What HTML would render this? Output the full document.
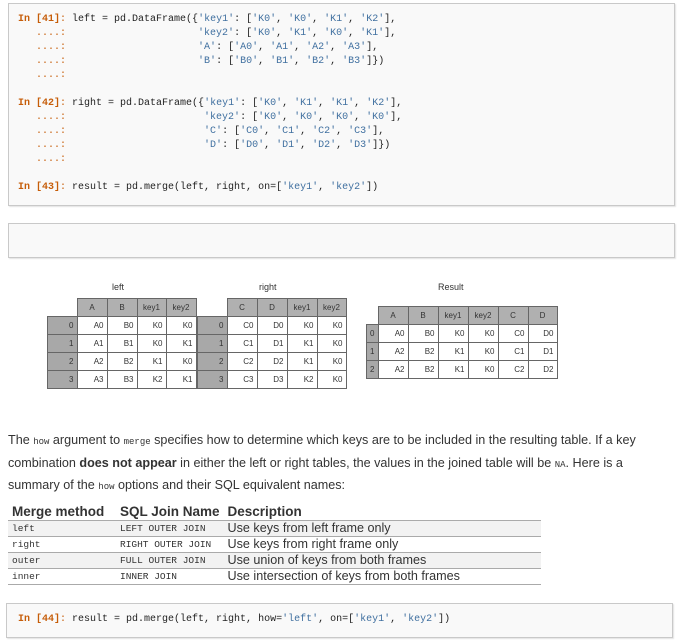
<!DOCTYPE html>
<html><head><style>
body{margin:0;width:700px;height:644px;background:#fff;position:relative;overflow:hidden;font-family:"Liberation Sans",sans-serif}
.box{position:absolute;background:#f9f9f9;border:1px solid #c9c9c9;box-shadow:1px 1px 1px #e4e4e4}
pre{position:absolute;margin:0;font-family:"Liberation Mono",monospace;font-size:10px;line-height:14px;color:#222}
.p{color:#c65d09;font-weight:bold}
.c{color:#c65d09}
.s{color:#4070a0}
table.df{position:absolute;border-collapse:collapse;font-size:8px;color:#333}
table.df td{border:1px solid #666;height:17px;padding:0 3px;text-align:right;background:#fff}
table.df td.h{background:#b0b0b0;text-align:center}
table.df td.i{background:#a8a8a8}
table.df td.e{border:none;background:none}
.lbl{position:absolute;font-size:9px;color:#333}
.txt{position:absolute;left:8px;width:670px;font-size:12.6px;line-height:20.5px;color:#333}
code{font-family:"Liberation Mono",monospace;font-size:9px}
table.m{position:absolute;left:8px;top:503px;border-collapse:collapse;font-size:12.6px;color:#333;white-space:nowrap}
table.m th{text-align:left;font-weight:bold;padding:0 4px;height:17px;line-height:17px;border-bottom:1px solid #aaa;font-size:13.5px}
table.m td{padding:0 4px;height:15px;line-height:15px;border-bottom:1px solid #aaa}
table.m tr:nth-child(2) td,table.m tr:nth-child(4) td{background:#f2f2f2}
table.m td.k{font-family:"Liberation Mono",monospace;font-size:9.5px}
</style></head><body>
<div class="box" style="left:8px;top:3px;width:665px;height:201px"></div>
<pre style="left:18px;top:13px"><span class="p">In [41]</span><span class="c">:</span> left = pd.DataFrame({<span class="s">'key1'</span>: [<span class="s">'K0'</span>, <span class="s">'K0'</span>, <span class="s">'K1'</span>, <span class="s">'K2'</span>],
<span class="c">   ....:</span>                      <span class="s">'key2'</span>: [<span class="s">'K0'</span>, <span class="s">'K1'</span>, <span class="s">'K0'</span>, <span class="s">'K1'</span>],
<span class="c">   ....:</span>                      <span class="s">'A'</span>: [<span class="s">'A0'</span>, <span class="s">'A1'</span>, <span class="s">'A2'</span>, <span class="s">'A3'</span>],
<span class="c">   ....:</span>                      <span class="s">'B'</span>: [<span class="s">'B0'</span>, <span class="s">'B1'</span>, <span class="s">'B2'</span>, <span class="s">'B3'</span>]})
<span class="c">   ....:</span>

<span class="p">In [42]</span><span class="c">:</span> right = pd.DataFrame({<span class="s">'key1'</span>: [<span class="s">'K0'</span>, <span class="s">'K1'</span>, <span class="s">'K1'</span>, <span class="s">'K2'</span>],
<span class="c">   ....:</span>                       <span class="s">'key2'</span>: [<span class="s">'K0'</span>, <span class="s">'K0'</span>, <span class="s">'K0'</span>, <span class="s">'K0'</span>],
<span class="c">   ....:</span>                       <span class="s">'C'</span>: [<span class="s">'C0'</span>, <span class="s">'C1'</span>, <span class="s">'C2'</span>, <span class="s">'C3'</span>],
<span class="c">   ....:</span>                       <span class="s">'D'</span>: [<span class="s">'D0'</span>, <span class="s">'D1'</span>, <span class="s">'D2'</span>, <span class="s">'D3'</span>]})
<span class="c">   ....:</span>

<span class="p">In [43]</span><span class="c">:</span> result = pd.merge(left, right, on=[<span class="s">'key1'</span>, <span class="s">'key2'</span>])</pre>
<div class="box" style="left:8px;top:223px;width:665px;height:33px"></div>

<div class="lbl" style="left:112px;top:282px">left</div>
<table class="df" style="left:47px;top:298px">
<tr><td class="e" style="width:23px"></td><td class="h" style="width:23px">A</td><td class="h" style="width:23px">B</td><td class="h" style="width:22px">key1</td><td class="h" style="width:23px">key2</td></tr>
<tr><td class="i">0</td><td>A0</td><td>B0</td><td>K0</td><td>K0</td></tr>
<tr><td class="i">1</td><td>A1</td><td>B1</td><td>K0</td><td>K1</td></tr>
<tr><td class="i">2</td><td>A2</td><td>B2</td><td>K1</td><td>K0</td></tr>
<tr><td class="i">3</td><td>A3</td><td>B3</td><td>K2</td><td>K1</td></tr>
</table>
<div class="lbl" style="left:259px;top:282px">right</div>
<table class="df" style="left:197px;top:298px">
<tr><td class="e" style="width:23px"></td><td class="h" style="width:23px">C</td><td class="h" style="width:23px">D</td><td class="h" style="width:23px">key1</td><td class="h" style="width:22px">key2</td></tr>
<tr><td class="i">0</td><td>C0</td><td>D0</td><td>K0</td><td>K0</td></tr>
<tr><td class="i">1</td><td>C1</td><td>D1</td><td>K1</td><td>K0</td></tr>
<tr><td class="i">2</td><td>C2</td><td>D2</td><td>K1</td><td>K0</td></tr>
<tr><td class="i">3</td><td>C3</td><td>D3</td><td>K2</td><td>K0</td></tr>
</table>
<div class="lbl" style="left:438px;top:282px">Result</div>
<table class="df" style="left:366px;top:306px">
<tr><td class="e" style="width:5px"></td><td class="h" style="width:23px">A</td><td class="h" style="width:23px">B</td><td class="h" style="width:23px">key1</td><td class="h" style="width:23px">key2</td><td class="h" style="width:23px">C</td><td class="h" style="width:22px">D</td></tr>
<tr><td class="i">0</td><td>A0</td><td>B0</td><td>K0</td><td>K0</td><td>C0</td><td>D0</td></tr>
<tr><td class="i">1</td><td>A2</td><td>B2</td><td>K1</td><td>K0</td><td>C1</td><td>D1</td></tr>
<tr><td class="i">2</td><td>A2</td><td>B2</td><td>K1</td><td>K0</td><td>C2</td><td>D2</td></tr>
</table>

<div class="txt" style="top:430px">The <code>how</code> argument to <code>merge</code> specifies how to determine which keys are to be included in the resulting table. If a key combination <b>does not appear</b> in either the left or right tables, the values in the joined table will be <code>NA</code>. Here is a summary of the <code>how</code> options and their SQL equivalent names:</div>

<table class="m">
<tr><th style="width:100px">Merge method</th><th style="width:99px">SQL Join Name</th><th style="width:309px">Description</th></tr>
<tr><td class="k">left</td><td class="k">LEFT OUTER JOIN</td><td>Use keys from left frame only</td></tr>
<tr><td class="k">right</td><td class="k">RIGHT OUTER JOIN</td><td>Use keys from right frame only</td></tr>
<tr><td class="k">outer</td><td class="k">FULL OUTER JOIN</td><td>Use union of keys from both frames</td></tr>
<tr><td class="k">inner</td><td class="k">INNER JOIN</td><td>Use intersection of keys from both frames</td></tr>
</table>

<div class="box" style="left:6px;top:603px;width:665px;height:33px"></div>
<pre style="left:18px;top:613px"><span class="p">In [44]</span><span class="c">:</span> result = pd.merge(left, right, how=<span class="s">'left'</span>, on=[<span class="s">'key1'</span>, <span class="s">'key2'</span>])</pre>
</body></html>
